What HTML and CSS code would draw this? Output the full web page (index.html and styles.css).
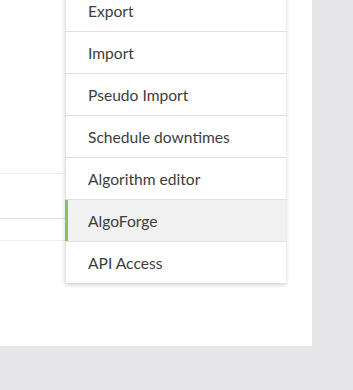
FILE: index.html
```html
<!DOCTYPE html>
<html>
<head>
<meta charset="utf-8">
<link rel="stylesheet" href="styles.css">
</head>
<body>
<div class="page">
  <div class="panel">
    <div class="table">
      <div class="row"></div>
      <div class="row last"></div>
    </div>
    <ul class="menu">
      <li class="item">Export</li>
      <li class="item">Import</li>
      <li class="item">Pseudo Import</li>
      <li class="item">Schedule downtimes</li>
      <li class="item">Algorithm editor</li>
      <li class="item active">AlgoForge</li>
      <li class="item">API Access</li>
    </ul>
  </div>
</div>
</body>
</html>
```
FILE: styles.css
```css
html, body {
  margin: 0;
  padding: 0;
}
body {
  background: #e6e6e8;
  font-family: Lato, "Noto Sans", sans-serif;
  width: 353px;
  height: 390px;
  overflow: hidden;
}
.page {
  width: 353px;
  height: 390px;
  background: #e6e6e8;
}
.panel {
  position: relative;
  width: 312px;
  height: 346px;
  background: #ffffff;
  overflow: hidden;
}
.table {
  padding-top: 173px;
  width: 100px;
}
.row {
  height: 44px;
  border-top: 1px solid #ececec;
}
.row.last {
  height: 21px;
  border-top: 1px solid #e2e2e2;
  box-shadow: 0 1px 1px rgba(0,0,0,0.06);
}
.menu {
  position: absolute;
  top: -10px;
  left: 65px;
  width: 221px;
  margin: 0;
  padding: 0;
  list-style: none;
  background: #fff;
  border-left: 1px solid #e4e4e4;
  box-shadow: 0 2px 4px rgba(0,0,0,0.18);
  box-sizing: border-box;
}
.item {
  height: 41px;
  line-height: 43px;
  padding-left: 22px;
  font-size: 15.6px;
  color: #3d3d3d;
  border-bottom: 1px solid #e0e0e0;
  box-sizing: content-box;
}
.item:last-child {
  border-bottom: none;
}
.item.active {
  background: #f1f1f1;
  box-shadow: inset 3px 0 0 #8fc15a;
  margin-left: -1px;
  padding-left: 23px;
}
```
